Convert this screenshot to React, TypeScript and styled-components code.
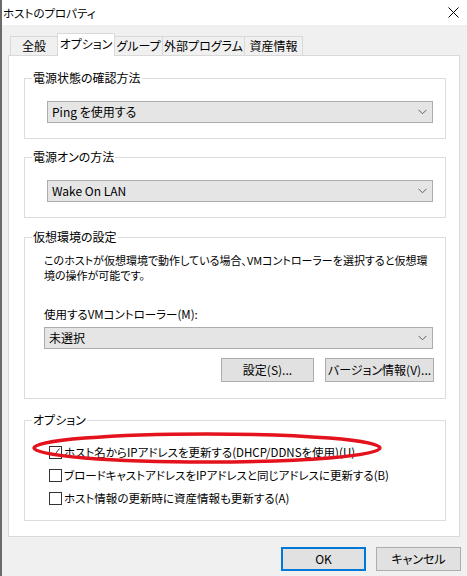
import React from "react";
import styled, { createGlobalStyle } from "styled-components";

const GlobalStyle = createGlobalStyle`
  html, body { margin: 0; padding: 0; background: #f0f0f0; }
  body {
    font-family: "Noto Sans CJK JP", "Noto Sans", sans-serif;
    font-size: 12px;
    color: #000;
  }
  * { box-sizing: border-box; }
`;

const Window = styled.div`
  position: relative;
  width: 467px;
  height: 576px;
  overflow: hidden;
  background: #f0f0f0;
  border-left: 2px solid #6b6b6b;
  display: flex;
  flex-direction: column;
  font-family: "Noto Sans CJK JP", "Noto Sans", sans-serif;
  font-size: 12px;
  font-feature-settings: "palt";
  color: #000;
`;

const TitleBar = styled.div`
  height: 25px;
  flex: none;
  background: #fff;
  display: flex;
  align-items: center;
  justify-content: space-between;
  padding: 0 8px 0 1px;
`;

const Title = styled.span`
  font-size: 11.5px;
  line-height: 16px;
`;

const Body = styled.div`
  flex: 1;
  display: flex;
  flex-direction: column;
  padding: 8px 7px 0 6px;
`;

const Tabs = styled.div`
  height: 22px;
  display: flex;
  align-items: flex-end;
  padding-left: 2px;
`;

const Tab = styled.div<{ $w: number; $active?: boolean }>`
  position: relative;
  width: ${(p) => p.$w}px;
  height: ${(p) => (p.$active ? 23 : 19)}px;
  margin-bottom: ${(p) => (p.$active ? -1 : 0)}px;
  margin-left: -1px;
  z-index: ${(p) => (p.$active ? 2 : 1)};
  background: ${(p) => (p.$active ? "#fff" : "#f0f0f0")};
  border: 1px solid #d9d9d9;
  border-bottom: none;
  display: flex;
  align-items: center;
  justify-content: center;
  padding-bottom: ${(p) => (p.$active ? 2 : 0)}px;
  line-height: 16px;
  &:first-child { margin-left: 0; }
`;

const Panel = styled.div`
  height: 482px;
  flex: none;
  background: #fff;
  border: 1px solid #d9d9d9;
  padding: 0 13px 0 15px;
  display: flex;
  flex-direction: column;
`;

const Group = styled.fieldset<{ $mt: number }>`
  margin: ${(p) => p.$mt}px 0 0 0;
  min-width: 0;
  border: 1px solid #dcdcdc;
  padding: 0 12px 0 7px;
`;

const Legend = styled.legend`
  padding: 0 1px;
  line-height: 16px;
  font-size: 12px;
`;

const GroupContent = styled.div<{ $pad: string }>`
  padding: ${(p) => p.$pad};
  display: flex;
  flex-direction: column;
`;

const Select = styled.div<{ $mt?: number }>`
  height: 22px;
  margin-top: ${(p) => p.$mt ?? 0}px;
  background: #e5e5e5;
  border: 1px solid #acacac;
  display: flex;
  align-items: center;
  justify-content: space-between;
  padding: 0 5px 0 4px;
  line-height: 16px;
`;

const Description = styled.div`
  font-size: 11px;
  line-height: 15px;
  white-space: nowrap;
`;

const FieldLabel = styled.div`
  margin-top: 24px;
  line-height: 15px;
  font-size: 11.5px;
`;

const ButtonRow = styled.div`
  margin-top: 9px;
  display: flex;
  justify-content: flex-end;
  gap: 11px;
  margin-right: -1px;
`;

const Button = styled.button<{ $w: number; $primary?: boolean }>`
  width: ${(p) => p.$w}px;
  height: 24px;
  margin: 0;
  padding: 0;
  background: #e1e1e1;
  border: 1px solid ${(p) => (p.$primary ? "#0078d7" : "#adadad")};
  box-shadow: ${(p) => (p.$primary ? "inset 0 0 0 1px #0078d7" : "none")};
  font-family: inherit;
  font-size: 12px;
  font-feature-settings: "palt";
  color: #000;
  line-height: 16px;
`;

const CheckList = styled.div`
  display: flex;
  flex-direction: column;
  gap: 3px;
`;

const CheckRow = styled.div`
  height: 20px;
  display: flex;
  align-items: center;
  gap: 2px;
  line-height: 16px;
  white-space: nowrap;
  font-size: 11.5px;
`;

const Box = styled.span`
  width: 13px;
  height: 13px;
  flex: none;
  border: 1px solid #333;
  background: #fff;
  display: flex;
  align-items: center;
  justify-content: center;
`;

const Footer = styled.div`
  margin-top: 10px;
  margin-right: -1px;
  display: flex;
  justify-content: flex-end;
  gap: 10px;
`;

const Annotation = styled.svg`
  position: absolute;
  left: 29px;
  top: 431px;
  pointer-events: none;
`;

const Chevron = () => (
  <svg width="9" height="6" viewBox="0 0 9 6">
    <polyline points="0.5,0.8 4.5,4.8 8.5,0.8" fill="none" stroke="#606060" strokeWidth="1" />
  </svg>
);

const CloseIcon = () => (
  <svg width="11" height="11" viewBox="0 0 11 11">
    <line x1="0.5" y1="0.5" x2="10.5" y2="10.5" stroke="#000" strokeWidth="1" />
    <line x1="10.5" y1="0.5" x2="0.5" y2="10.5" stroke="#000" strokeWidth="1" />
  </svg>
);

const Check = ({ checked, label }: { checked?: boolean; label: string }) => (
  <CheckRow>
    <Box>
      {checked && (
        <svg width="11" height="11" viewBox="0 0 11 11">
          <polyline points="1.5,5.5 4,8.5 9.5,1.5" fill="none" stroke="#333" strokeWidth="1" />
        </svg>
      )}
    </Box>
    <span>{label}</span>
  </CheckRow>
);

const tabs = [
  { label: "全般", w: 48 },
  { label: "オプション", w: 58, active: true },
  { label: "グループ", w: 49 },
  { label: "外部プログラム", w: 83 },
  { label: "資産情報", w: 59 },
];

export default function App() {
  return (
    <>
      <GlobalStyle />
      <Window>
        <TitleBar>
          <Title>ホストのプロパティ</Title>
          <CloseIcon />
        </TitleBar>
        <Body>
          <Tabs>
            {tabs.map((t) => (
              <Tab key={t.label} $w={t.w} $active={t.active}>
                {t.label}
              </Tab>
            ))}
          </Tabs>
          <Panel>
            <Group $mt={14}>
              <Legend>電源状態の確認方法</Legend>
              <GroupContent $pad="15px 0 15px 15px">
                <Select>
                  <span>Ping を使用する</span>
                  <Chevron />
                </Select>
              </GroupContent>
            </Group>
            <Group $mt={10}>
              <Legend>電源オンの方法</Legend>
              <GroupContent $pad="15px 0 15px 15px">
                <Select>
                  <span>Wake On LAN</span>
                  <Chevron />
                </Select>
              </GroupContent>
            </Group>
            <Group $mt={11}>
              <Legend>仮想環境の設定</Legend>
              <GroupContent $pad="8px 0 16px 12px">
                <Description>
                  このホストが仮想環境で動作している場合、VMコントローラーを選択すると仮想環
                  <br />
                  境の操作が可能です。
                </Description>
                <FieldLabel>使用するVMコントローラー(M):</FieldLabel>
                <Select $mt={5}>
                  <span>未選択</span>
                  <Chevron />
                </Select>
                <ButtonRow>
                  <Button $w={93}>設定(S)...</Button>
                  <Button $w={109}>バージョン情報(V)...</Button>
                </ButtonRow>
              </GroupContent>
            </Group>
            <Group $mt={13}>
              <Legend>オプション</Legend>
              <GroupContent $pad="14px 0 12px 17px">
                <CheckList>
                  <Check checked label="ホスト名からIPアドレスを更新する(DHCP/DDNSを使用)(U)" />
                  <Check label="ブロードキャストアドレスをIPアドレスと同じアドレスに更新する(B)" />
                  <Check label="ホスト情報の更新時に資産情報も更新する(A)" />
                </CheckList>
              </GroupContent>
            </Group>
          </Panel>
          <Footer>
            <Button $w={85} $primary>OK</Button>
            <Button $w={85}>キャンセル</Button>
          </Footer>
        </Body>
        <Annotation width="353" height="34" viewBox="0 0 353 34">
          <ellipse cx="176" cy="17" rx="173" ry="14" fill="none" stroke="#e3121c" strokeWidth="3.5" />
        </Annotation>
      </Window>
    </>
  );
}
